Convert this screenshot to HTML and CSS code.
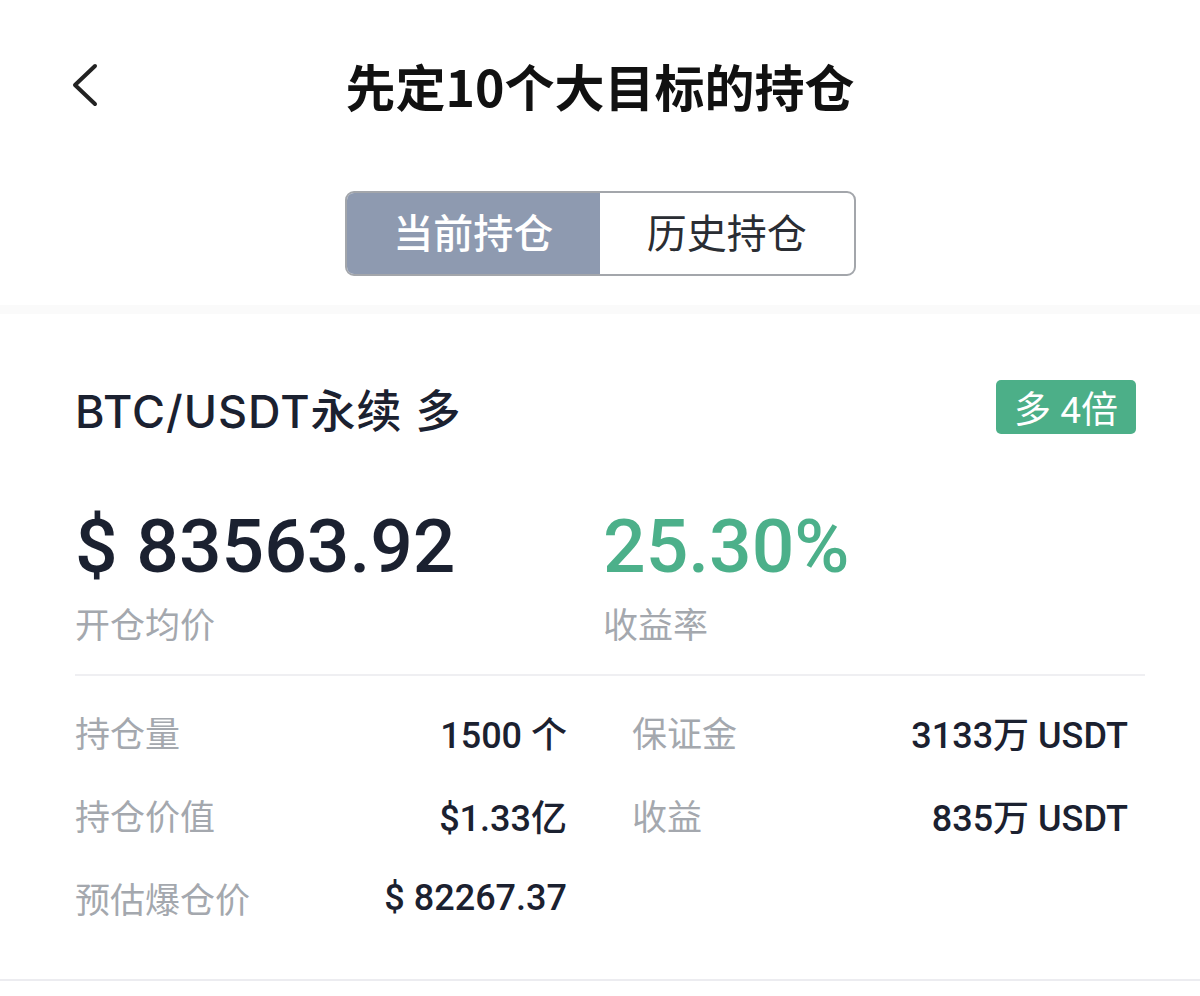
FILE: index.html
```html
<!DOCTYPE html>
<html lang="zh-CN">
<head>
    <meta charset="UTF-8">
    <meta name="viewport" content="width=device-width, initial-scale=1.0">
    <title>先定10个大目标的持仓</title>
    <link rel="stylesheet" href="styles.css">
</head>
<body>
    <header class="topbar">
        <a class="back" href="#">
            <svg width="30" height="44" viewBox="0 0 30 44">
                <path d="M25 3 L5 22 L25 41" fill="none" stroke="#222" stroke-width="4" stroke-linecap="round" stroke-linejoin="round"/>
            </svg>
        </a>
        <h1 class="title">先定10个大目标的持仓</h1>
    </header>

    <div class="tabs">
        <div class="tab active">当前持仓</div>
        <div class="tab">历史持仓</div>
    </div>

    <div class="band"></div>

    <section class="card">
        <div class="card-head">
            <div class="pair">BTC/USDT永续 多</div>
            <div class="badge">多 4倍</div>
        </div>

        <div class="summary">
            <div class="summary-item">
                <div class="big">$ 83563.92</div>
                <div class="label">开仓均价</div>
            </div>
            <div class="summary-item">
                <div class="big green">25.30%</div>
                <div class="label">收益率</div>
            </div>
        </div>

        <div class="divider"></div>

        <div class="details">
            <div class="row"><span class="label">持仓量</span><span class="value">1500 个</span></div>
            <div class="row"><span class="label">保证金</span><span class="value">3133万 USDT</span></div>
            <div class="row"><span class="label">持仓价值</span><span class="value">$1.33亿</span></div>
            <div class="row"><span class="label">收益</span><span class="value">835万 USDT</span></div>
            <div class="row"><span class="label">预估爆仓价</span><span class="value">$ 82267.37</span></div>
        </div>
    </section>
</body>
</html>
```

FILE: styles.css
```css
body {
    margin: 0;
    background: #fff;
    font-family: Roboto, "Noto Sans CJK SC", sans-serif;
    color: #1b2130;
}

.topbar {
    position: relative;
    height: 170px;
    display: flex;
    align-items: center;
    justify-content: center;
}

.back {
    position: absolute;
    left: 70px;
    top: 63px;
    display: block;
    line-height: 0;
}

.title {
    margin: 0;
    font-size: 50px;
    font-weight: 700;
    color: #111;
    font-family: "Noto Sans CJK SC", sans-serif;
}

.tabs {
    width: 507px;
    height: 81px;
    margin: 21px auto 0;
    display: flex;
    border: 2px solid #a3a6ab;
    border-radius: 9px;
    overflow: hidden;
}

.tab {
    flex: 1;
    display: flex;
    align-items: center;
    justify-content: center;
    padding-bottom: 6px;
    font-size: 40px;
    color: #2a2d33;
    font-family: "Noto Sans CJK SC", sans-serif;
}

.tab.active {
    background-color: #8e9ab0;
    color: #fff;
    font-weight: 500;
}

.band {
    height: 9px;
    margin-top: 29px;
    background: #fafafa;
}

.card {
    padding: 67px 64px 40px 75px;
    border-bottom: 2px solid #ececf0;
}

.card-head {
    display: flex;
    justify-content: space-between;
    align-items: center;
    height: 54px;
}

.pair {
    font-family: Inter, "Noto Sans CJK SC", sans-serif;
    font-size: 45px;
    font-weight: 500;
    letter-spacing: 1px;
    color: #1b2130;
}

.badge {
    height: 54px;
    padding: 0 18px;
    display: flex;
    align-items: center;
    background-color: #4caf88;
    color: #fff;
    font-size: 37px;
    border-radius: 5px;
    margin-top: -2px;
}

.summary {
    display: flex;
    margin-top: 71px;
}

.summary-item {
    width: 528px;
}

.big {
    font-size: 75px;
    font-weight: 500;
    line-height: 80px;
    color: #1b2130;
}

.big.green {
    color: #4cb08a;
}

.label {
    color: #a4a8ae;
    font-size: 35px;
    font-family: "Noto Sans CJK SC", sans-serif;
}

.summary .label {
    margin-top: 15px;
    line-height: 44px;
}

.divider {
    height: 2px;
    background: #efeff2;
    margin-top: 29px;
    margin-right: -9px;
}

.details {
    display: grid;
    grid-template-columns: 492px 496px;
    column-gap: 65px;
    padding-top: 14px;
}

.row {
    height: 83px;
    display: flex;
    align-items: center;
    justify-content: space-between;
}

.value {
    font-size: 36px;
    font-weight: 500;
    color: #1b2130;
}
```
